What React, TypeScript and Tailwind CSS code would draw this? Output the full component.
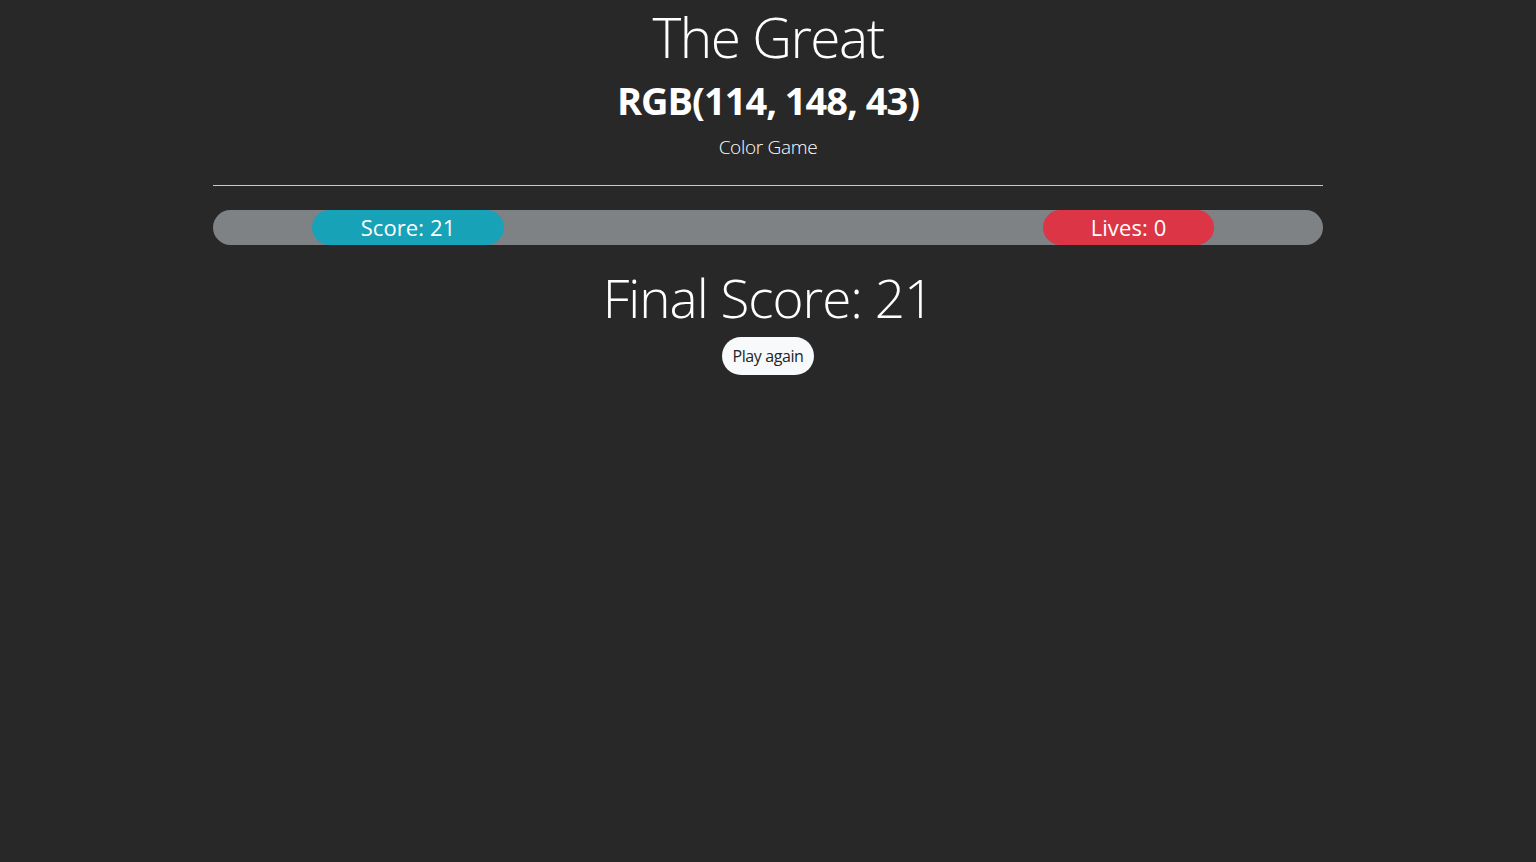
import React from "react";

const font = { fontFamily: '"Open Sans", "Noto Sans", sans-serif' };

export default function App() {
  return (
    <div
      className="min-h-[862px] w-full bg-[#282828] text-white"
      style={font}
    >
      <div className="mx-auto flex w-[1110px] flex-col items-center">
        <h1 className="mt-[4px] text-[55px] leading-[66px] font-light tracking-[-1.5px]">
          The Great
        </h1>
        <h2 className="mt-[7px] text-[38px] leading-[46px] font-bold tracking-[-1px]">
          RGB(114, 148, 43)
        </h2>
        <p className="mt-[10px] text-[19px] leading-[28px] font-light tracking-[-0.3px]">
          Color Game
        </p>
        <hr className="mt-[24px] w-full border-t border-[#c9c9c9]" />
        <div className="mt-[24px] flex h-[35px] w-full flex-row items-center rounded-full bg-[#7e8285]">
          <div className="ml-[99px] flex h-full w-[192px] items-center justify-center rounded-full bg-[#17a2b8] text-[22px] tracking-[0.1px]">
            Score: 21
          </div>
          <div className="flex-1" />
          <div className="mr-[109px] flex h-full w-[171px] items-center justify-center rounded-full bg-[#dc3545] text-[22px] tracking-[0.1px]">
            Lives: 0
          </div>
        </div>
        <h1 className="mt-[22px] text-[53px] leading-[62px] font-light tracking-[-1px]">
          Final Score: 21
        </h1>
        <button className="mt-[8px] flex h-[38px] w-[92px] items-center justify-center rounded-full bg-[#f8f9fa] text-[16px] tracking-[-0.4px] text-[#212529]">
          Play again
        </button>
      </div>
    </div>
  );
}
